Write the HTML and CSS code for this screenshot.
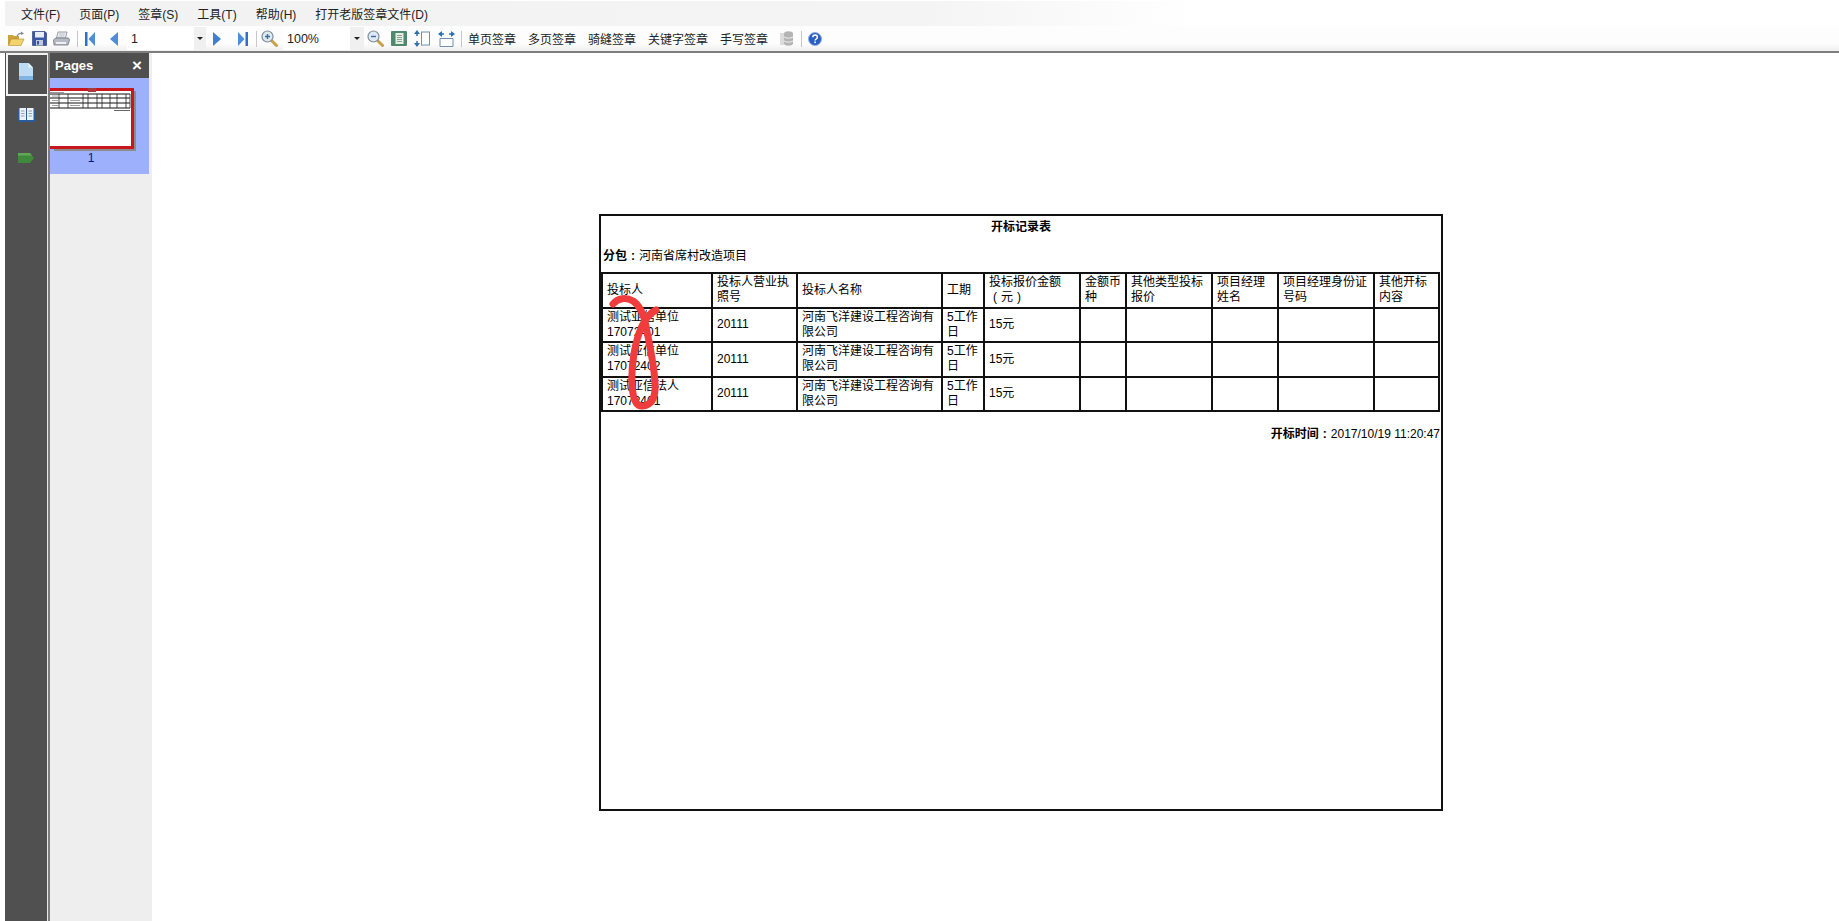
FILE: index.html
```html
<!DOCTYPE html>
<html lang="zh-CN">

<head>
    <meta charset="UTF-8">
    <title>开标记录表</title>
    <link rel="stylesheet" href="styles.css">
</head>

<body>
    <nav class="menubar">
        <a href="#">文件(F)</a>
        <a href="#">页面(P)</a>
        <a href="#">签章(S)</a>
        <a href="#">工具(T)</a>
        <a href="#">帮助(H)</a>
        <a href="#">打开老版签章文件(D)</a>
    </nav>

    <div class="toolbar">
        <span class="tool">
            <svg width="18" height="16" viewBox="0 0 18 16">
                <path d="M1 4h5l1 1h5v3H5L3 14H1z" fill="#c9a23a" />
                <path d="M4 8h13l-3 6.500H1.500z" fill="#f3d36b" stroke="#b48a2a" stroke-width=".6" />
                <path d="M10 5c1-2 3-3 5-2.500" fill="none" stroke="#7d8a96" stroke-width="1.200" />
                <path d="M14 .5l3 2-3 1.500z" fill="#7d8a96" />
            </svg>
        </span>
        <span class="tool ml1">
            <svg width="15" height="15" viewBox="0 0 15 15">
                <path d="M.5.500h12.500l1.500 1.500v12.500H.5z" fill="#3a55a6" stroke="#24387a" stroke-width=".6" />
                <rect x="3" y="1" width="9" height="5.500" fill="#e8edf7" />
                <rect x="4" y="9" width="7" height="5.500" fill="#c3c9d6" />
                <rect x="5" y="10" width="2" height="3.500" fill="#3a55a6" />
            </svg>
        </span>
        <span class="tool">
            <svg width="17" height="16" viewBox="0 0 17 16">
                <path d="M5 1h9l-1.500 6h-9z" fill="#f4f4f6" stroke="#7f8590" stroke-width=".8" />
                <path d="M2.500 7h13l1 2-1.500 5H1l-.5-5z" fill="#b5bac4" stroke="#6f7580" stroke-width=".8" />
                <rect x="3" y="11" width="10" height="2" fill="#eef0f3" />
                <path d="M6 3h6M5.500 5h6" stroke="#9aa0aa" stroke-width=".7" />
            </svg>
        </span>
        <span class="sep ml3"></span>
        <span class="tool nav-tool ml1">
            <svg width="10" height="14" viewBox="0 0 10 14">
                <rect x="0" y="0" width="2.500" height="14" fill="#2f6fc4" />
                <path d="M10 0v14L3.500 7z" fill="#4f8ddb" />
            </svg>
        </span>
        <span class="tool nav-tool ml4">
            <svg width="8" height="14" viewBox="0 0 8 14">
                <path d="M8 0v14L0 7z" fill="#4f8ddb" />
            </svg>
        </span>
        <span class="combo page-combo ml3">1</span>
        <span class="arrow"></span>
        <span class="tool">
            <svg width="8" height="14" viewBox="0 0 8 14">
                <path d="M0 0v14l8-7z" fill="#3f7fd2" />
            </svg>
        </span>
        <span class="tool ml4">
            <svg width="10" height="14" viewBox="0 0 10 14">
                <path d="M0 0v14l6.500-7z" fill="#4f8ddb" />
                <rect x="7.500" y="0" width="2.500" height="14" fill="#2f6fc4" />
            </svg>
        </span>
        <span class="sep"></span>
        <span class="tool">
            <svg width="17" height="17" viewBox="0 0 17 17">
                <path d="M10.500 10.500l5 5" stroke="#c8a04a" stroke-width="3" stroke-linecap="round" />
                <circle cx="6.500" cy="6.500" r="5.500" fill="#dfe9f3" stroke="#7d8d9c" stroke-width="1.200" />
                <path d="M4 6.500h5M6.500 4v5" stroke="#3a6aa8" stroke-width="1.400" />
            </svg>
        </span>
        <span class="combo zoom-combo ml3">100%</span>
        <span class="arrow"></span>
        <span class="tool">
            <svg width="17" height="17" viewBox="0 0 17 17">
                <path d="M10.500 10.500l5 5" stroke="#c8a04a" stroke-width="3" stroke-linecap="round" />
                <circle cx="6.500" cy="6.500" r="5.500" fill="#dfe9f3" stroke="#7d8d9c" stroke-width="1.200" />
                <path d="M4 6.500h5" stroke="#3a6aa8" stroke-width="1.400" />
            </svg>
        </span>
        <span class="tool ml2">
            <svg width="16" height="15" viewBox="0 0 16 15">
                <rect x="0" y="0" width="16" height="15" rx="1" fill="#4e8a70" />
                <rect x="4.500" y="2" width="8" height="11" fill="#e6efe6" />
                <path d="M6 4.500h5M6 6.500h5M6 8.500h5M6 10.500h5" stroke="#6d8f7f" stroke-width=".8" />
            </svg>
        </span>
        <span class="tool ml1">
            <svg width="16" height="17" viewBox="0 0 16 17">
                <rect x="7.500" y="2" width="8" height="13" fill="#fff" stroke="#6f8fae" />
                <path d="M3 0l3 4H0zM3 17l3-4H0z" fill="#2f6fb0" />
                <path d="M3 4v2M3 11v2" stroke="#2f6fb0" stroke-width="1.500" />
            </svg>
        </span>
        <span class="tool ml2">
            <svg width="17" height="16" viewBox="0 0 17 16">
                <path d="M2 7.500h13M2 7.500v8h13v-8" fill="#fff" stroke="#6f8fae" />
                <path d="M0 3l4-3v6zM17 3l-4-3v6z" fill="#2f6fb0" />
                <path d="M4 3h2M11 3h2" stroke="#2f6fb0" stroke-width="1.500" />
            </svg>
        </span>
        <span class="sep ml2"></span>
        <a href="#" class="tool-label ml5">单页签章</a>
        <a href="#" class="tool-label">多页签章</a>
        <a href="#" class="tool-label">骑缝签章</a>
        <a href="#" class="tool-label">关键字签章</a>
        <a href="#" class="tool-label">手写签章</a>
        <span class="tool stack-tool">
            <svg width="15" height="15" viewBox="0 0 15 15">
                <rect x="0" y="2" width="4" height="12" fill="#dcdcdc" />
                <path d="M4 2.500c0-3 9-3 9 0v10c0 3-9 3-9 0z" fill="#b4b4b4" />
                <path d="M4 6c2 1.500 7 1.500 9 0M4 10c2 1.500 7 1.500 9 0" fill="none" stroke="#efefef" />
            </svg>
        </span>
        <span class="sep ml4"></span>
        <span class="tool help-tool ml5">
            <svg width="14" height="14" viewBox="0 0 14 14">
                <circle cx="7" cy="7" r="6.500" fill="#2a5fc0" stroke="#8fb0e6" />
                <path d="M4.800 5.300c0-3 4.600-3 4.600 0 0 1.700-2.300 1.700-2.300 3.300" fill="none" stroke="#fff" stroke-width="1.500" />
                <rect x="6.300" y="9.500" width="1.600" height="1.600" fill="#fff" />
            </svg>
        </span>
    </div>

    <div class="workspace">
        <aside class="sidebar">
            <div class="side-item active">
                <svg width="14" height="17" viewBox="0 0 14 17">
                    <path d="M0 0h9.500L14 4.500V17H0z" fill="#bcdcf5" />
                    <path d="M9.500 0v4.500H14z" fill="#e6f3fc" />
                    <rect x="0" y="13" width="14" height="4" fill="#7fb4e4" />
                </svg>
            </div>
            <div class="side-item">
                <svg width="17" height="14" viewBox="0 0 17 14">
                    <rect x="0" y="1" width="17" height="13" fill="#2a5b9c" />
                    <rect x="1.500" y="0" width="6.500" height="12" fill="#eaf2fa" />
                    <rect x="9" y="0" width="6.500" height="12" fill="#eaf2fa" />
                    <path d="M3 3h3.500M3 5.500h3.500M3 8h3.500M10.500 3H14M10.500 5.500H14M10.500 8H14" stroke="#7a8ea6" stroke-width=".8" />
                </svg>
            </div>
            <div class="side-item">
                <svg width="18" height="12" viewBox="0 0 18 12">
                    <path d="M1 1h12l4 5-4 5H1z" fill="#3f8a3a" />
                    <path d="M1 1h12l2 2.500H1z" fill="#5fa954" />
                </svg>
            </div>
        </aside>
        <div class="splitter"></div>

        <section class="pages-panel">
            <header class="pages-head">
                <span>Pages</span>
                <span class="pages-close">×</span>
            </header>
            <div class="pages-list">
                <svg class="thumb" width="86" height="63" viewBox="0 0 86 63">
                    <rect x="4" y="3" width="82" height="60" fill="#8c8c8c" />
                    <rect x="0" y="0" width="84" height="61" fill="#c8171c" />
                    <rect x="0" y="3" width="81" height="55" fill="#fff" />
                    <rect x="38" y="0" width="8" height="4" fill="#a8393c" />
                    <rect x="0" y="4" width="14" height="1" fill="#999" />
                    <path d="M0 6h80M0 10h80M0 15h80M0 20h80" stroke="#111" />
                    <path d="M9 6v14M18 6v14M33 6v14M38 6v14M47 6v14M52 6v14M60 6v14M67 6v14M76 6v14M80 6v14" stroke="#222" stroke-width=".8" />
                    <path d="M2 8h6M2 12.500h6M2 17.500h6M20 12.500h10M20 17.500h10" stroke="#888" stroke-width=".8" />
                    <rect x="64" y="22" width="16" height="1" fill="#666" />
                </svg>
                <div class="thumb-num">1</div>
            </div>
        </section>

        <main class="viewer">
            <div class="sheet">
                <h1 class="sheet-title">开标记录表</h1>
                <p class="sheet-pack"><b>分包<span class="mark">:</span></b>河南省席村改造项目</p>
                <table class="record">
                    <colgroup>
                        <col class="c1">
                        <col class="c2">
                        <col class="c3">
                        <col class="c4">
                        <col class="c5">
                        <col class="c6">
                        <col class="c7">
                        <col class="c8">
                        <col class="c9">
                        <col class="c10">
                    </colgroup>
                    <thead>
                        <tr>
                            <th>投标人</th>
                            <th>投标人营业执照号</th>
                            <th>投标人名称</th>
                            <th>工期</th>
                            <th>投标报价金额<br><span class="mark">(</span>元<span class="mark">)</span></th>
                            <th>金额币种</th>
                            <th>其他类型投标报价</th>
                            <th>项目经理姓名</th>
                            <th>项目经理身份证号码</th>
                            <th>其他开标内容</th>
                        </tr>
                    </thead>
                    <tbody>
                        <tr>
                            <td>测试亚信单位<br>17072401</td>
                            <td>20111</td>
                            <td>河南飞洋建设工程咨询有限公司</td>
                            <td>5工作日</td>
                            <td>15元</td>
                            <td></td>
                            <td></td>
                            <td></td>
                            <td></td>
                            <td></td>
                        </tr>
                        <tr>
                            <td>测试亚信单位<br>17072402</td>
                            <td>20111</td>
                            <td>河南飞洋建设工程咨询有限公司</td>
                            <td>5工作日</td>
                            <td>15元</td>
                            <td></td>
                            <td></td>
                            <td></td>
                            <td></td>
                            <td></td>
                        </tr>
                        <tr>
                            <td>测试亚信法人<br>17072401</td>
                            <td>20111</td>
                            <td>河南飞洋建设工程咨询有限公司</td>
                            <td>5工作日</td>
                            <td>15元</td>
                            <td></td>
                            <td></td>
                            <td></td>
                            <td></td>
                            <td></td>
                        </tr>
                    </tbody>
                </table>
                <p class="sheet-time"><b>开标时间<span class="mark">:</span></b>2017/10/19 11:20:47</p>

                <!-- red pen mark over the first column -->
                <svg class="scribble" width="60" height="120" viewBox="0 0 60 120">
                    <path d="M4 9C9 3 17 2 24 6C32 11 35 21 37 31C40 48 45 68 46 88C47 103 42 110 34 111C27 112 24 104 23 90C22 70 26 46 33 31C36 25 41 18 47 15" fill="none" stroke="#f03c3c" stroke-width="7" stroke-linecap="round" stroke-linejoin="round" />
                </svg>
            </div>
        </main>
    </div>
</body>

</html>
```
FILE: styles.css
```css
html,
body {
    height: 100%;
}

body {
    margin: 0;
    display: flex;
    flex-direction: column;
    overflow: hidden;
    background-color: #fff;
    color: #000;
    font-family: "Liberation Sans", "Noto Sans CJK SC", sans-serif;
    font-size: 12px;
}

a {
    color: inherit;
    text-decoration: none;
}

.menubar {
    height: 25px;
    margin: 1px 0 0 5px;
    padding-left: 16px;
    display: flex;
    align-items: center;
    gap: 19px;
    color: #222;
    background: linear-gradient(to right, #f2f2f2 0, #f4f4f4 50%, #fff 65%);
}

.toolbar {
    height: 25px;
    padding-left: 5px;
    display: flex;
    align-items: center;
    border-bottom: 2px solid #7d7d7d;
    background: linear-gradient(to bottom, #fdfdfd 0, #fdfdfd 70%, #efefef 100%);
}

.tool {
    width: 22px;
    height: 22px;
    flex: none;
    display: flex;
    align-items: center;
    justify-content: center;
}

.nav-tool {
    width: 20px;
}

.stack-tool {
    width: 15px;
}

.help-tool {
    width: 14px;
}

.sep {
    width: 4px;
    height: 16px;
    flex: none;
    background: linear-gradient(#c8c8c8, #c8c8c8) center / 1px 100% no-repeat;
}

.combo {
    height: 23px;
    padding-left: 4px;
    box-sizing: border-box;
    flex: none;
    display: flex;
    align-items: center;
    background-color: #fff;
    font-size: 12.5px;
    color: #222;
}

.page-combo {
    width: 67px;
}

.zoom-combo {
    width: 67px;
}

.arrow {
    height: 23px;
    flex: none;
    background-color: #f0f0f0;
    position: relative;
    width: 12px;
}

.zoom-combo+.arrow {
    width: 14px;
}

.arrow::after {
    content: "";
    position: absolute;
    left: 3px;
    top: 10px;
    border-left: 3px solid transparent;
    border-right: 3px solid transparent;
    border-top: 3px solid #222;
}

.zoom-combo+.arrow::after {
    left: 4px;
}

.tool-label {
    margin-right: 12px;
    flex: none;
    color: #222;
}

.ml1 {
    margin-left: 1px;
}

.ml2 {
    margin-left: 2px;
}

.ml3 {
    margin-left: 3px;
}

.ml4 {
    margin-left: 4px;
}

.ml5 {
    margin-left: 5px;
}

.workspace {
    flex: 1;
    min-height: 0;
    display: flex;
}

.sidebar {
    width: 42px;
    margin-left: 5px;
    flex: none;
    background-color: #505050;
}

.side-item {
    height: 43px;
    padding-bottom: 6px;
    box-sizing: border-box;
    display: flex;
    align-items: center;
    justify-content: center;
}

.side-item.active {
    margin-left: 1px;
    margin-right: -1px;
    border: 2px solid #f2f2f2;
    border-right: none;
    padding-right: 4px;
}

.splitter {
    width: 3px;
    flex: none;
    background: linear-gradient(to right, #e8e8e8 0, #e8e8e8 1px, #7d7d7d 1px, #7d7d7d 100%);
}

.pages-panel {
    width: 102px;
    flex: none;
    background-color: #eee;
}

.pages-head {
    width: 99px;
    height: 25px;
    padding: 0 7px 0 5px;
    box-sizing: border-box;
    display: flex;
    align-items: center;
    justify-content: space-between;
    background-color: #4f4f4f;
    color: #fff;
    font-size: 13px;
    font-weight: bold;
}

.pages-close {
    font-size: 17px;
    line-height: 17px;
}

.pages-list {
    width: 99px;
    height: 96px;
    padding-top: 10px;
    box-sizing: border-box;
    background-color: #9db0fb;
}

.thumb {
    display: block;
}

.thumb-num {
    width: 82px;
    text-align: center;
    line-height: 15px;
    color: #001a80;
}

.viewer {
    flex: 1;
    padding: 161px 0 0 447px;
    background-color: #fff;
}

.sheet {
    width: 844px;
    height: 597px;
    box-sizing: border-box;
    position: relative;
    border: 2px solid #111;
    padding-top: 4px;
}

.sheet-title {
    margin: 0;
    font-size: 12px;
    line-height: 15px;
    text-align: center;
}

.sheet-pack {
    margin: 14px 0 0 2px;
    line-height: 15px;
}

/* full width colon and brackets, sitting in the middle of their cell */
.mark {
    display: inline-block;
    width: 12px;
    text-align: center;
}

.record {
    width: 839px;
    margin: 8px 0 0 0;
    table-layout: fixed;
    border-collapse: collapse;
}

.c1 { width: 110px; }
.c2 { width: 85px; }
.c3 { width: 145px; }
.c4 { width: 42px; }
.c5 { width: 96px; }
.c6 { width: 46px; }
.c7 { width: 86px; }
.c8 { width: 66px; }
.c9 { width: 96px; }
.c10 { width: 65px; }

.record th,
.record td {
    height: 32.500px;
    padding: 0 3px 0 4px;
    border: 2px solid #111;
    text-align: left;
    font-weight: normal;
    line-height: 15px;
    vertical-align: middle;
    word-break: break-all;
}

.sheet-time {
    margin: 15px 1px 0 0;
    line-height: 15px;
    text-align: right;
}

.scribble {
    position: absolute;
    left: 8px;
    top: 79px;
}
```
